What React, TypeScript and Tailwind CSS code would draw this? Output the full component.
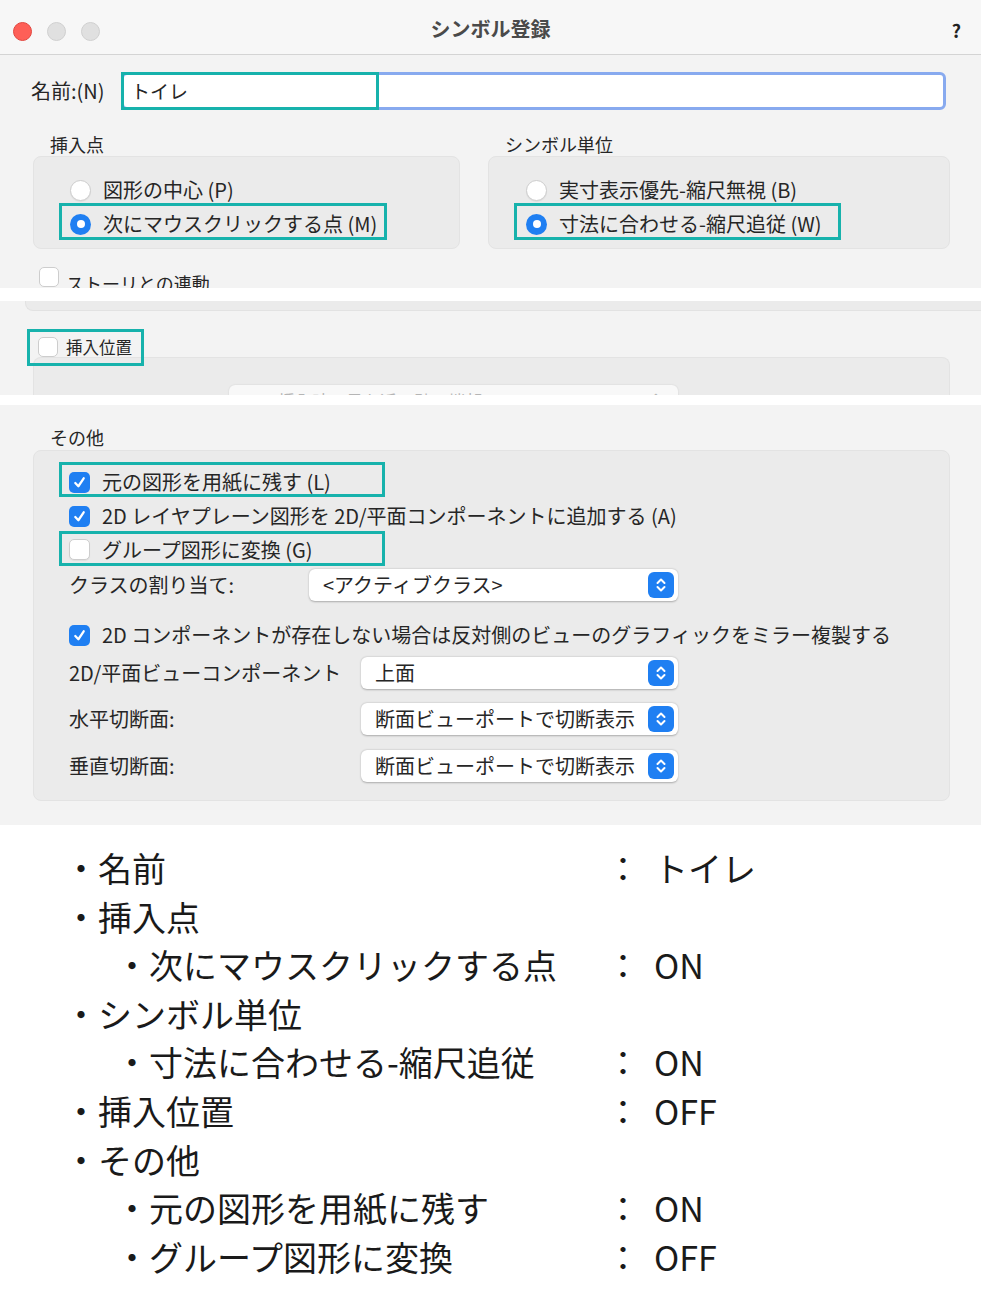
import React from "react";

const FONT = "font-['Noto_Sans_CJK_JP','Noto_Sans',sans-serif]";

function Radio({ on }: { on?: boolean }) {
  return on ? (
    <span className="flex h-[21px] w-[21px] shrink-0 items-center justify-center rounded-full bg-[#1f7ff2]">
      <span className="h-[8px] w-[8px] rounded-full bg-white" />
    </span>
  ) : (
    <span className="h-[21px] w-[21px] shrink-0 rounded-full border border-[#cdcdcd] bg-white shadow-[0_1px_1px_rgba(0,0,0,0.06)]" />
  );
}

function Check({ on }: { on?: boolean }) {
  return on ? (
    <span className="flex h-[21px] w-[21px] shrink-0 items-center justify-center rounded-[5px] bg-[#1f7ff2]">
      <svg width="15" height="15" viewBox="0 0 16 16" fill="none">
        <path d="M3.5 8.5 L6.8 12 L12.5 3.5" stroke="white" strokeWidth="2.4" strokeLinecap="round" strokeLinejoin="round" />
      </svg>
    </span>
  ) : (
    <span className="h-[21px] w-[21px] shrink-0 rounded-[5px] border border-[#cdcdcd] bg-white shadow-[0_1px_1px_rgba(0,0,0,0.06)]" />
  );
}

function Stepper() {
  return (
    <span className="flex h-[26px] w-[26px] shrink-0 items-center justify-center rounded-[6px] bg-[#1f7ff2]">
      <svg width="12" height="18" viewBox="0 0 12 18" fill="none">
        <path d="M2.5 7 L6 3.5 L9.5 7" stroke="white" strokeWidth="2" strokeLinecap="round" strokeLinejoin="round" />
        <path d="M2.5 11 L6 14.5 L9.5 11" stroke="white" strokeWidth="2" strokeLinecap="round" strokeLinejoin="round" />
      </svg>
    </span>
  );
}

function Teal({ cls }: { cls: string }) {
  return <span className={"pointer-events-none absolute border-[3px] border-[#17b2ac] " + cls} />;
}

function Select({ w, text }: { w: string; text: string }) {
  return (
    <div className={"flex h-[32px] items-center justify-between rounded-[6px] bg-white pl-[14px] pr-[4px] shadow-[0_0.5px_2px_rgba(0,0,0,0.28)] " + w}>
      <span className="whitespace-nowrap text-[20px] leading-[24px] text-[#262626]">{text}</span>
      <Stepper />
    </div>
  );
}

const listRows: { label: string; value?: string; indent?: boolean }[] = [
  { label: "名前", value: "トイレ" },
  { label: "挿入点" },
  { label: "次にマウスクリックする点", value: "ON", indent: true },
  { label: "シンボル単位" },
  { label: "寸法に合わせる-縮尺追従", value: "ON", indent: true },
  { label: "挿入位置", value: "OFF" },
  { label: "その他" },
  { label: "元の図形を用紙に残す", value: "ON", indent: true },
  { label: "グループ図形に変換", value: "OFF", indent: true },
];

export default function App() {
  return (
    <div className={"w-[988px] bg-white text-[#262626] " + FONT}>
      {/* Section 1 */}
      <div className="h-[288px] w-[981px] overflow-hidden bg-[#f3f3f3]">
        <div className="relative flex h-[55px] items-center justify-center border-b border-[#d4d4d4] bg-[#f7f7f7]">
          <div className="absolute left-[13px] top-[22px] flex gap-[15px]">
            <span className="h-[19px] w-[19px] rounded-full border border-[#e2463f] bg-[#fe5f57]" />
            <span className="h-[19px] w-[19px] rounded-full border border-[#d0d0d0] bg-[#e0e0e0]" />
            <span className="h-[19px] w-[19px] rounded-full border border-[#d0d0d0] bg-[#e0e0e0]" />
          </div>
          <span className="mt-[4px] text-[20px] font-bold text-[#4a4a4a]">シンボル登録</span>
          <span className="absolute right-[20px] top-[17px] text-[18px] font-bold text-[#222]">?</span>
        </div>
        <div className="flex items-center pt-[17px]">
          <span className="ml-[31px] w-[90px] text-[20px]">名前:(N)</span>
          <div className="relative flex h-[38px] w-[825px] items-center rounded-[6px] border-[3px] border-[#88aaef] bg-white pl-[7px]">
            <span className="text-[19px]">トイレ</span>
            <Teal cls="-left-[3px] -top-[3px] h-[38px] w-[258px]" />
          </div>
        </div>
        <div className="mt-[24px] flex gap-[28px] pl-[33px]">
          <div className="w-[427px]">
            <div className="h-[22px] pl-[17px] text-[18px] leading-[20px]">挿入点</div>
            <div className="h-[93px] rounded-[8px] border border-[#e3e3e3] bg-[#ebebeb] pt-[16px]">
              <div className="flex h-[34px] items-center gap-[12px] pl-[36px]">
                <Radio />
                <span className="text-[20px]">図形の中心 (P)</span>
              </div>
              <div className="relative flex h-[34px] items-center gap-[12px] pl-[36px]">
                <Radio on />
                <span className="text-[20px]">次にマウスクリックする点 (M)</span>
                <Teal cls="left-[25px] -top-[4px] h-[37px] w-[328px]" />
              </div>
            </div>
          </div>
          <div className="w-[462px]">
            <div className="h-[22px] pl-[17px] text-[18px] leading-[20px]">シンボル単位</div>
            <div className="h-[93px] rounded-[8px] border border-[#e3e3e3] bg-[#ebebeb] pt-[16px]">
              <div className="flex h-[34px] items-center gap-[12px] pl-[37px]">
                <Radio />
                <span className="text-[20px]">実寸表示優先-縮尺無視 (B)</span>
              </div>
              <div className="relative flex h-[34px] items-center gap-[12px] pl-[37px]">
                <Radio on />
                <span className="text-[20px]">寸法に合わせる-縮尺追従 (W)</span>
                <Teal cls="left-[25px] -top-[4px] h-[37px] w-[327px]" />
              </div>
            </div>
          </div>
        </div>
        <div className="mt-[18px] flex items-start gap-[7px] pl-[39px]">
          <span className="h-[20px] w-[20px] rounded-[5px] border border-[#cdcdcd] bg-white" />
          <span className="mt-[3px] text-[18px]">ストーリとの連動</span>
        </div>
      </div>

      <div className="h-[13px]" />

      {/* Section 2 */}
      <div className="h-[94px] w-[981px] overflow-hidden bg-[#f3f3f3]">
        <div className="ml-[25px] h-[10px] rounded-bl-[8px] border-b border-l border-[#e2e2e2] bg-[#ebebeb]" />
        <div className="relative ml-[38px] mt-[26px] flex h-[20px] items-center gap-[8px]">
          <span className="h-[20px] w-[20px] rounded-[5px] border border-[#cdcdcd] bg-white" />
          <span className="text-[16.5px]">挿入位置</span>
          <Teal cls="-left-[11px] -top-[8px] h-[37px] w-[117px]" />
        </div>
        <div className="ml-[33px] h-[60px] w-[917px] rounded-t-[8px] border-l border-r border-t border-[#e3e3e3] bg-[#ebebeb] pt-[27px]">
          <div className="flex items-start">
            <span className="ml-[32px] mt-[6px] w-[163px] text-[17px] text-[#b0b0b0]">1/2 位置:</span>
            <div className="flex h-[32px] w-[449px] items-start justify-between rounded-[6px] bg-[#f8f8f8] pl-[49px] pr-[16px] pt-[3px] shadow-[0_0.5px_2px_rgba(0,0,0,0.12)]">
              <span className="text-[17px] text-[#b5b5b5]">挿入時に最も近い壁の端部</span>
              <span className="text-[14px] text-[#b5b5b5]">⌃</span>
            </div>
          </div>
        </div>
      </div>

      <div className="h-[10px]" />

      {/* Section 3 */}
      <div className="h-[420px] w-[981px] bg-[#f3f3f3] pt-[22px]">
        <div className="h-[23px] pl-[50px] text-[18px] leading-[20px]">その他</div>
        <div className="ml-[33px] h-[351px] w-[917px] rounded-[8px] border border-[#e3e3e3] bg-[#ebebeb] pt-[14px]">
          <div className="relative flex h-[34px] items-center gap-[12px] pl-[35px]">
            <Check on />
            <span className="text-[20px]">元の図形を用紙に残す (L)</span>
            <Teal cls="left-[25px] -top-[3px] h-[35px] w-[326px]" />
          </div>
          <div className="flex h-[34px] items-center gap-[12px] pl-[35px]">
            <Check on />
            <span className="text-[20px]">2D レイヤプレーン図形を 2D/平面コンポーネントに追加する (A)</span>
          </div>
          <div className="relative flex h-[33px] items-center gap-[12px] pl-[35px]">
            <Check />
            <span className="text-[20px]">グループ図形に変換 (G)</span>
            <Teal cls="left-[25px] -top-[2px] h-[35px] w-[326px]" />
          </div>
          <div className="mt-[1px] flex h-[36px] items-center pl-[35px]">
            <span className="w-[240px] text-[20px]">クラスの割り当て:</span>
            <Select w="w-[369px]" text="<アクティブクラス>" />
          </div>
          <div className="mt-[15px] flex h-[34px] items-center gap-[12px] pl-[35px]">
            <Check on />
            <span className="whitespace-nowrap text-[20px]">2D コンポーネントが存在しない場合は反対側のビューのグラフィックをミラー複製する</span>
          </div>
          <div className="mt-[3px] flex h-[36px] items-center pl-[35px]">
            <span className="w-[292px] whitespace-nowrap text-[20px]">2D/平面ビューコンポーネント</span>
            <Select w="w-[317px]" text="上面" />
          </div>
          <div className="mt-[10px] flex h-[36px] items-center pl-[35px]">
            <span className="w-[292px] text-[20px]">水平切断面:</span>
            <Select w="w-[317px]" text="断面ビューポートで切断表示" />
          </div>
          <div className="mt-[11px] flex h-[36px] items-center pl-[35px]">
            <span className="w-[292px] text-[20px]">垂直切断面:</span>
            <Select w="w-[317px]" text="断面ビューポートで切断表示" />
          </div>
        </div>
      </div>

      {/* List */}
      <div className="pb-[8px] pt-[19px] text-[34px] leading-[48.6px] text-[#1a1a1a]">
        {listRows.map((r, i) => (
          <div key={i} className="flex whitespace-nowrap">
            <span className={"w-[606px] shrink-0 " + (r.indent ? "pl-[115px]" : "pl-[64px]")}>
              {"・" + r.label}
            </span>
            {r.value !== undefined && (
              <>
                <span className="w-[48px] shrink-0">：</span>
                <span>{r.value}</span>
              </>
            )}
          </div>
        ))}
      </div>
    </div>
  );
}
